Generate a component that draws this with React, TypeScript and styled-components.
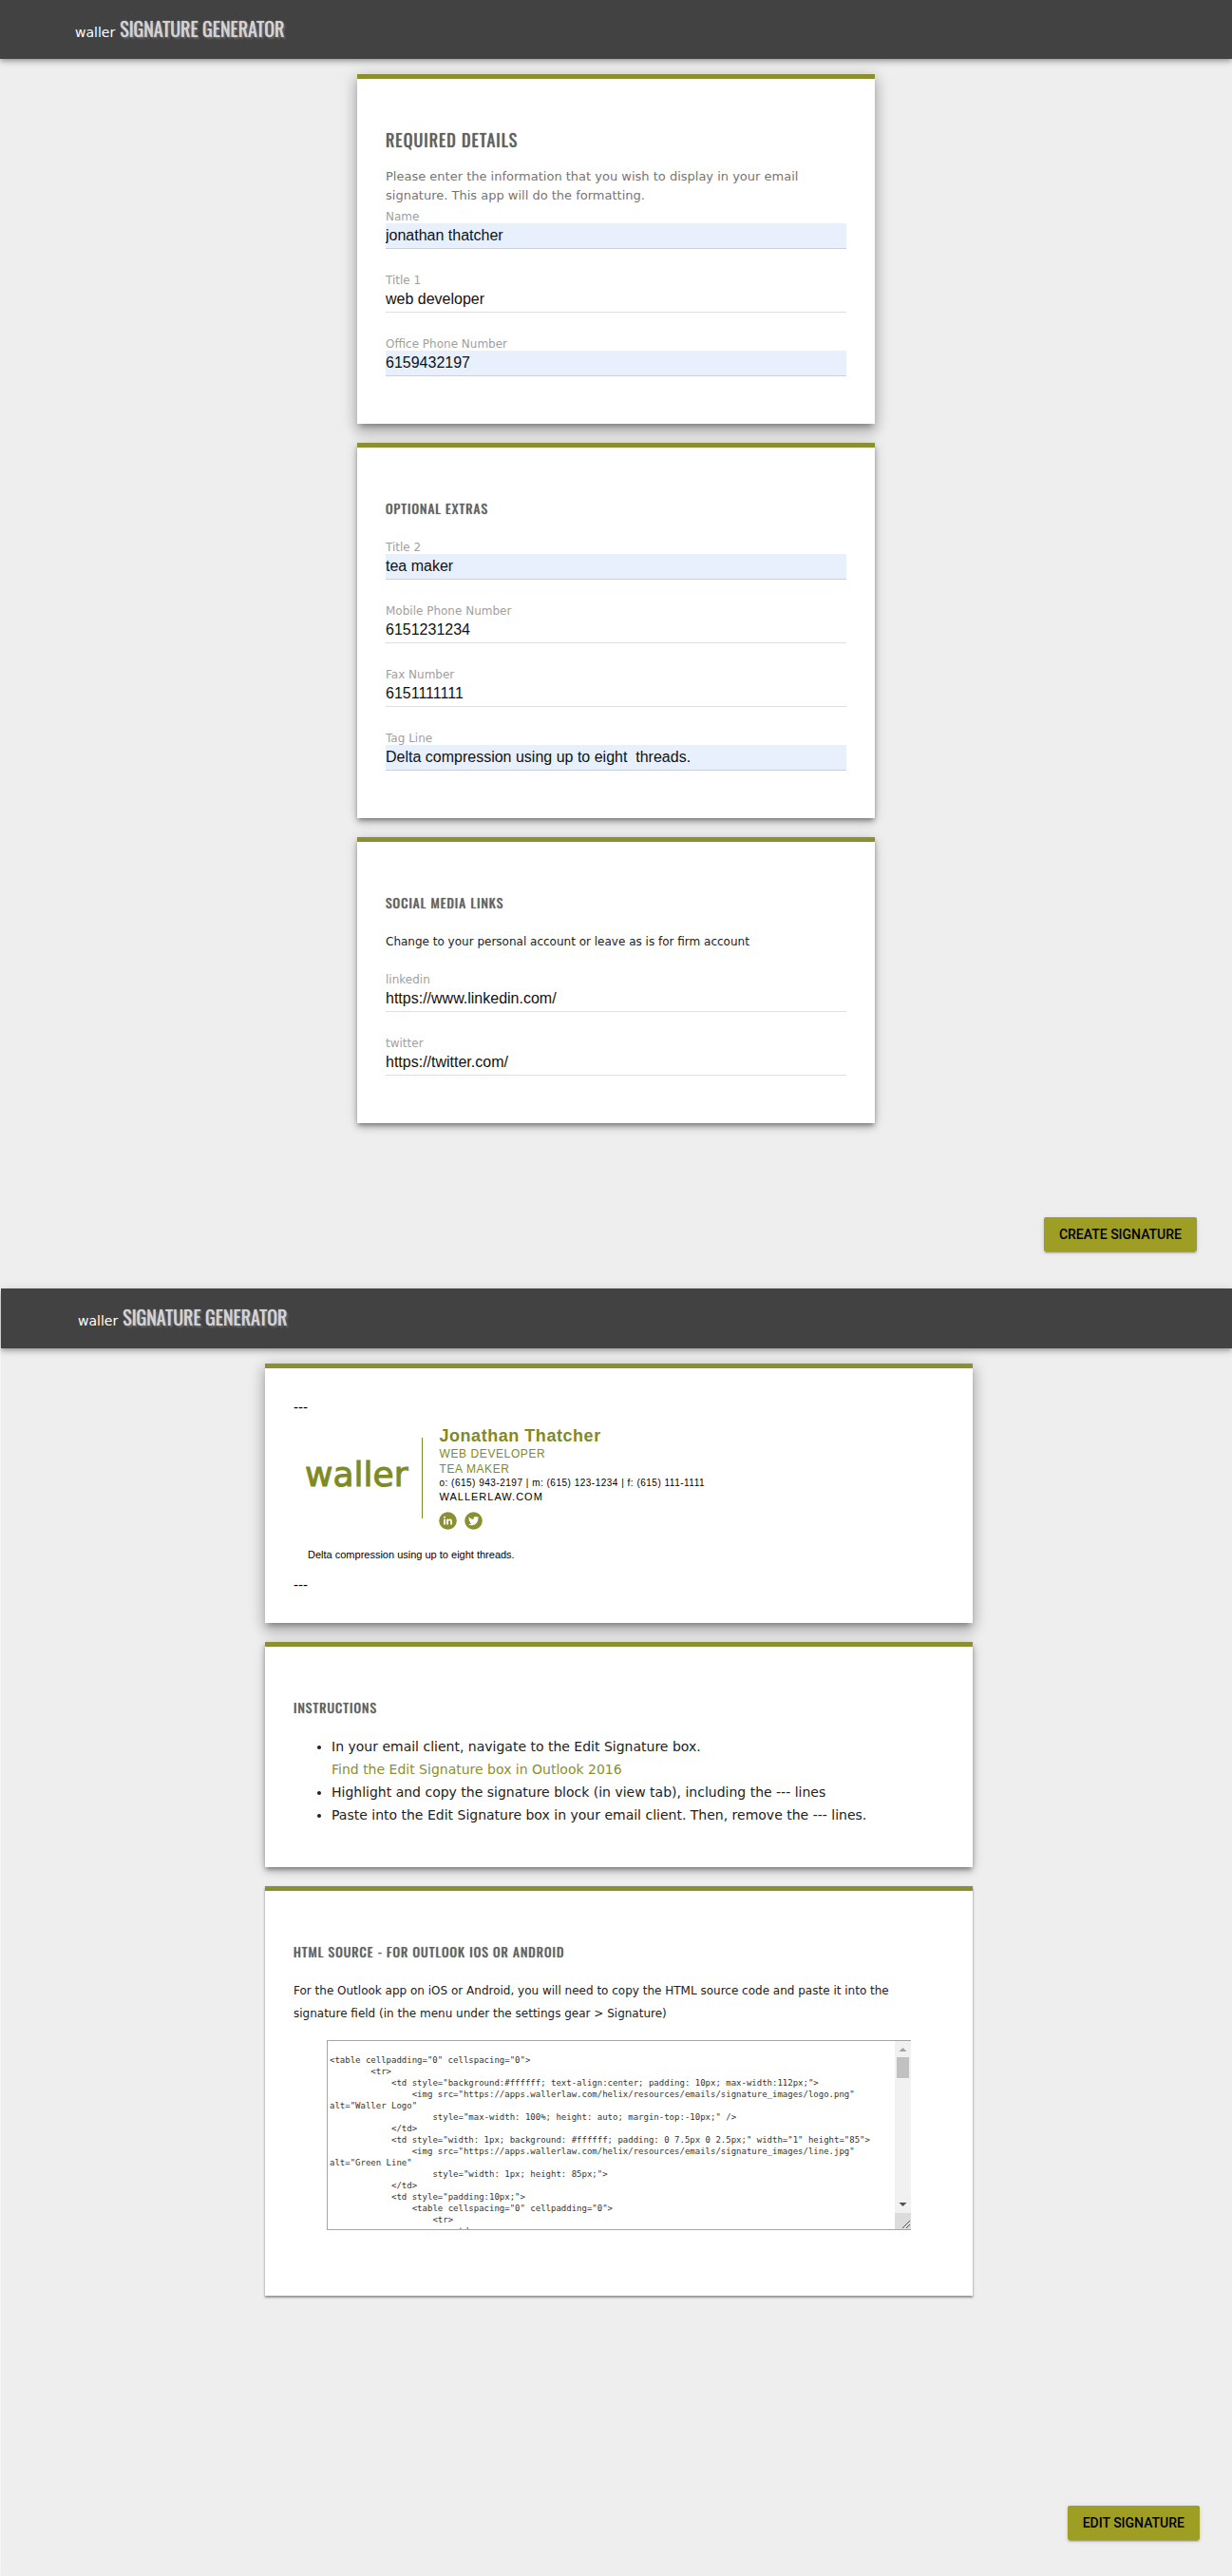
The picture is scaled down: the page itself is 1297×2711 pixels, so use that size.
import React from "react";
import styled, { createGlobalStyle } from "styled-components";

const OLIVE = "#8a8f2f";
const SANS = `Verdana, "DejaVu Sans", sans-serif`;
const ARIAL = `Arial, "Liberation Sans", sans-serif`;
const DISPLAY = `Oswald, "Liberation Sans Narrow", "Roboto Condensed", "DejaVu Sans Condensed", sans-serif`;

const GlobalStyle = createGlobalStyle`
  *, *::before, *::after { box-sizing: border-box; }
  body { margin: 0; background: #eee; color: #212121; font: 12px/20px ${SANS}; }
`;

const Screen = styled.section<{ $framed?: boolean }>`
  display: flow-root;
  background: #eee;
  border-left: ${(p) => (p.$framed ? "1px solid #f5f5f5" : "0")};
`;

const TopBar = styled.header<{ $inset: number; $height: number }>`
  display: flex;
  align-items: baseline;
  gap: 5px;
  height: ${(p) => p.$height}px;
  padding: 14px ${(p) => p.$inset}px 0;
  background: #424242;
  box-shadow: 0 2px 4px -1px rgba(0, 0, 0, 0.2), 0 4px 5px rgba(0, 0, 0, 0.14), 0 1px 10px rgba(0, 0, 0, 0.12);
`;

const Wordmark = styled.span`
  color: #fff;
  font: 14px/32px "DejaVu Sans", sans-serif;
`;

const AppName = styled.h1`
  margin: 0;
  color: #d3d3d3;
  font: 400 20px/32px ${DISPLAY};
  text-shadow: 0 0 1px #d3d3d3, 2px 2px 2px #666;
`;

const Stack = styled.main<{ $width: number; $lead?: number }>`
  display: grid;
  gap: 20px;
  width: 100%;
  max-width: ${(p) => p.$width + (p.$lead ?? 0)}px;
  margin: 16px auto 0;
  padding-left: ${(p) => p.$lead ?? 0}px;
`;

const shadows = [
  "0 1px 3px rgba(0,0,0,.2), 0 2px 2px rgba(0,0,0,.3)",
  "0 3px 5px -1px rgba(0,0,0,.4), 0 5px 8px rgba(0,0,0,.14), 0 1px 14px rgba(0,0,0,.12)",
  "0 5px 6px -3px rgba(0,0,0,.3), 0 8px 12px 1px rgba(0,0,0,.18), 0 3px 16px 2px rgba(0,0,0,.14)",
];

const Card = styled.section<{ $level: number; $top?: number; $bottom?: number }>`
  padding: ${(p) => p.$top ?? 52}px 30px ${(p) => p.$bottom ?? 50}px;
  background: #fff;
  border-top: 5px solid ${OLIVE};
  box-shadow: ${(p) => shadows[p.$level]};
`;

const Heading = styled.h2<{ $large?: boolean }>`
  margin: 0 0 17px;
  color: #616161;
  font: 400 ${(p) => (p.$large ? "18px" : "14px")}/24px ${DISPLAY};
  letter-spacing: 1px;
  text-transform: uppercase;
  text-shadow: 0 0 1px #616161;
`;

const Lead = styled.p`
  margin: 0 0 5px;
  color: #757575;
  font-size: 13px;
`;

const Note = styled.p<{ $loose?: boolean }>`
  margin: ${(p) => (p.$loose ? "17px 0 16px" : "19px 0 23px")};
  line-height: ${(p) => (p.$loose ? 24 : 20)}px;
`;

const Fields = styled.div<{ $space?: number }>`
  display: grid;
  gap: 26px;
  margin-top: ${(p) => p.$space ?? 0}px;
`;

const Field = styled.label`
  display: flex;
  flex-direction: column;
  color: #a0a0a0;
  line-height: 14px;
`;

const Input = styled.input<{ $filled?: boolean }>`
  width: 100%;
  height: 27px;
  padding: 0 0 1px;
  border: 0;
  border-bottom: 1px solid ${(p) => (p.$filled ? "#c8d0e2" : "#dedede")};
  border-radius: 0;
  outline: 0;
  background: ${(p) => (p.$filled ? "#e8f0fe" : "transparent")};
  color: #111;
  font: 16px/24px ${ARIAL};
`;

const Actions = styled.div<{ $space: number; $end: number; $bottom: number }>`
  display: flex;
  justify-content: flex-end;
  padding: ${(p) => p.$space}px ${(p) => p.$end}px ${(p) => p.$bottom}px;
`;

const Action = styled.button`
  height: 36px;
  padding: 0 16px;
  border: 0;
  border-radius: 2px;
  background: #9e9d24;
  color: #000;
  font: 500 14px/36px Roboto, sans-serif;
  text-transform: uppercase;
  box-shadow: 0 3px 1px -2px rgba(0, 0, 0, 0.2), 0 2px 2px rgba(0, 0, 0, 0.14), 0 1px 5px rgba(0, 0, 0, 0.12);
`;

const Marker = styled.p`
  margin: 0;
  color: #000;
  font: 14px/20px ${SANS};
`;

const Signature = styled.div`
  display: flex;
  align-items: center;
  padding: 9px 0 0 12px;
`;

const Logo = styled.span`
  color: #7e8a24;
  font: 36px/44px "DejaVu Sans", sans-serif;
  -webkit-text-stroke: 1px #7e8a24;
  padding-bottom: 6px;
`;

const Rule = styled.span`
  flex: none;
  width: 1px;
  height: 85px;
  margin: 0 17px 0 15px;
  background: #7e8a24;
`;

const Person = styled.div`
  display: flex;
  flex-direction: column;
  color: #000;
  font: 10px/14px ${ARIAL};
`;

const PersonName = styled.strong`
  color: #7e8a24;
  font-size: 18px;
  line-height: 22px;
  letter-spacing: 0.03em;
`;

const Role = styled.span`
  color: #7e8a24;
  font-size: 12px;
  line-height: 16px;
  letter-spacing: 0.05em;
`;

const Phones = styled.span`
  letter-spacing: 0.05em;
`;

const Site = styled.a`
  color: #000;
  font-size: 11px;
  line-height: 15px;
  letter-spacing: 1px;
  text-decoration: none;
`;

const Social = styled.div`
  display: flex;
  gap: 8px;
  margin-top: 8px;

  a, svg { display: block; width: 19px; height: 19px; }
`;

const TagLine = styled.p`
  margin: 18px 0 14px 15px;
  color: #000;
  font: 11px/16px ${ARIAL};
`;

const Steps = styled.ul`
  margin: 0;
  padding-left: 40px;
  font-size: 14px;
  line-height: 24px;

  a { color: ${OLIVE}; text-decoration: none; }
`;

const SourceBox = styled.div`
  display: flex;
  height: 200px;
  margin: 0 35px;
  border: 1px solid #a5a5a5;
  border-right: 0;
`;

const Source = styled.textarea`
  flex: 1;
  min-width: 0;
  padding: 2px;
  border: 0;
  outline: 0;
  resize: none;
  background: #fff;
  color: #333;
  font: 9px/12px "DejaVu Sans Mono", monospace;
  scrollbar-width: none;
`;

const ScrollTrack = styled.svg`
  flex: none;
  width: 17px;
  height: 198px;
`;

const markup = `
<table cellpadding="0" cellspacing="0">
        <tr>
            <td style="background:#ffffff; text-align:center; padding: 10px; max-width:112px;">
                <img src="https://apps.wallerlaw.com/helix/resources/emails/signature_images/logo.png" alt="Waller Logo"
                    style="max-width: 100%; height: auto; margin-top:-10px;" />
            </td>
            <td style="width: 1px; background: #ffffff; padding: 0 7.5px 0 2.5px;" width="1" height="85">
                <img src="https://apps.wallerlaw.com/helix/resources/emails/signature_images/line.jpg" alt="Green Line"
                    style="width: 1px; height: 85px;">
            </td>
            <td style="padding:10px;">
                <table cellspacing="0" cellpadding="0">
                    <tr>
                        <td>`;

type FieldSpec = { label: string; value: string; filled?: boolean };

const required: FieldSpec[] = [
  { label: "Name", value: "jonathan thatcher", filled: true },
  { label: "Title 1", value: "web developer" },
  { label: "Office Phone Number", value: "6159432197", filled: true },
];
const optional: FieldSpec[] = [
  { label: "Title 2", value: "tea maker", filled: true },
  { label: "Mobile Phone Number", value: "6151231234" },
  { label: "Fax Number", value: "6151111111" },
  { label: "Tag Line", value: "Delta compression using up to eight  threads.", filled: true },
];
const social: FieldSpec[] = [
  { label: "linkedin", value: "https://www.linkedin.com/" },
  { label: "twitter", value: "https://twitter.com/" },
];

const FieldList = ({ items, space }: { items: FieldSpec[]; space?: number }) => (
  <Fields $space={space}>
    {items.map((f) => (
      <Field key={f.label}>
        {f.label}
        <Input $filled={f.filled} defaultValue={f.value} />
      </Field>
    ))}
  </Fields>
);

const Bar = ({ inset, height }: { inset: number; height: number }) => (
  <TopBar $inset={inset} $height={height}>
    <Wordmark>waller</Wordmark>
    <AppName>SIGNATURE GENERATOR</AppName>
  </TopBar>
);

const LinkedIn = () => (
  <svg viewBox="0 0 19 19" aria-hidden="true">
    <circle cx="9.5" cy="9.5" r="9.3" fill={OLIVE} />
    <path fill="#fff" d="M5.1 7.7h1.8v5.9H5.1zM8.1 7.7h1.8v.8c.4-.6 1-.9 1.8-.9 1.6 0 2.3 1 2.3 2.7v3.3h-1.8v-3c0-.9-.3-1.4-1-1.4-.8 0-1.3.6-1.3 1.5v2.9H8.1z" />
    <circle cx="6" cy="5.8" r="1" fill="#fff" />
  </svg>
);

const Twitter = () => (
  <svg viewBox="0 0 19 19" aria-hidden="true">
    <circle cx="9.5" cy="9.5" r="9.3" fill={OLIVE} />
    <path
      fill="#fff"
      transform="translate(4 4) scale(.47)"
      d="M23.95 4.57a10 10 0 0 1-2.82.77 4.96 4.96 0 0 0 2.16-2.72c-.95.56-2 .96-3.13 1.18a4.92 4.92 0 0 0-8.38 4.48C7.69 8.1 4.07 6.13 1.64 3.16a4.92 4.92 0 0 0 1.52 6.57 4.9 4.9 0 0 1-2.23-.61v.06a4.92 4.92 0 0 0 3.95 4.83 5 5 0 0 1-2.21.08 4.94 4.94 0 0 0 4.6 3.42A9.87 9.87 0 0 1 0 19.54a13.99 13.99 0 0 0 7.55 2.21c9.14 0 14.3-7.72 14.3-14.41 0-.21 0-.42-.02-.63a9.94 9.94 0 0 0 2.46-2.55z"
    />
  </svg>
);

export default function App() {
  return (
    <>
      <GlobalStyle />
      <Screen>
        <Bar inset={79} height={62} />
        <Stack $width={545}>
          <Card $level={2}>
            <Heading $large>Required Details</Heading>
            <Lead>
              Please enter the information that you wish to display in your email signature. This app will do the
              formatting.
            </Lead>
            <FieldList items={required} />
          </Card>
          <Card $level={1}>
            <Heading>Optional Extras</Heading>
            <FieldList items={optional} space={22} />
          </Card>
          <Card $level={1}>
            <Heading>Social Media Links</Heading>
            <Note>Change to your personal account or leave as is for firm account</Note>
            <FieldList items={social} />
          </Card>
        </Stack>
        <Actions $space={99} $end={37} $bottom={39}>
          <Action type="button">Create Signature</Action>
        </Actions>
      </Screen>

      <Screen $framed>
        <Bar inset={81} height={63} />
        <Stack $width={745} $lead={5}>
          <Card $level={2} $top={31} $bottom={30}>
            <Marker>---</Marker>
            <Signature>
              <Logo>waller</Logo>
              <Rule />
              <Person>
                <PersonName>Jonathan Thatcher</PersonName>
                <Role>WEB DEVELOPER</Role>
                <Role>TEA MAKER</Role>
                <Phones>o: (615) 943-2197 | m: (615) 123-1234 | f: (615) 111-1111</Phones>
                <Site href="#site">WALLERLAW.COM</Site>
                <Social>
                  <a href="#linkedin" aria-label="LinkedIn"><LinkedIn /></a>
                  <a href="#twitter" aria-label="Twitter"><Twitter /></a>
                </Social>
              </Person>
            </Signature>
            <TagLine>Delta compression using up to eight threads.</TagLine>
            <Marker>---</Marker>
          </Card>
          <Card $level={1} $bottom={43}>
            <Heading>Instructions</Heading>
            <Steps>
              <li>
                In your email client, navigate to the Edit Signature box.
                <br />
                <a href="#outlook">Find the Edit Signature box in Outlook 2016</a>
              </li>
              <li>Highlight and copy the signature block (in view tab), including the --- lines</li>
              <li>Paste into the Edit Signature box in your email client. Then, remove the --- lines.</li>
            </Steps>
          </Card>
          <Card $level={0} $bottom={69}>
            <Heading>HTML Source - for Outlook iOS or Android</Heading>
            <Note $loose>
              For the Outlook app on iOS or Android, you will need to copy the HTML source code and paste it into the
              signature field (in the menu under the settings gear &gt; Signature)
            </Note>
            <SourceBox>
              <Source aria-label="HTML source" defaultValue={markup} readOnly />
              <ScrollTrack viewBox="0 0 17 198" aria-hidden="true">
                <path fill="#f1f1f1" d="M0 0h17v198H0z" />
                <path fill="#a3a3a3" d="M8.500 7l4 4h-8z" />
                <path fill="#c1c1c1" d="M2 17h13v22H2z" />
                <path fill="#505050" d="M4.500 170h8l-4 4z" />
                <path fill="#dcdcdc" d="M0 181h17v17H0z" />
                <path stroke="#555" d="M8 197l8-8M12 197l4-4" />
              </ScrollTrack>
            </SourceBox>
          </Card>
        </Stack>
        <Actions $space={221} $end={34} $bottom={37}>
          <Action type="button">Edit Signature</Action>
        </Actions>
      </Screen>
    </>
  );
}
